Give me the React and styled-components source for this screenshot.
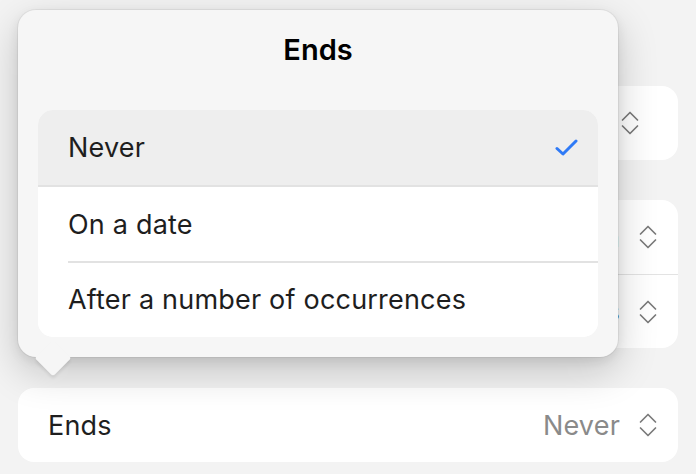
import React from "react";
import styled, { createGlobalStyle } from "styled-components";

const Global = createGlobalStyle`
  html, body { margin: 0; padding: 0; background: #f3f3f3; }
  body { font-family: Inter, "Noto Sans", "Liberation Sans", sans-serif; -webkit-font-smoothing: antialiased; }
  * { box-sizing: border-box; }
`;

const Page = styled.div`
  position: relative;
  width: 696px;
  height: 474px;
  overflow: hidden;
  background: #f3f3f3;
  padding: 86px 18px 0 18px;
`;

const Form = styled.div`
  display: flex;
  flex-direction: column;
  gap: 40px;
`;

const Card = styled.div`
  background: #ffffff;
  border-radius: 16px;
  overflow: hidden;
`;

const Row = styled.div`
  height: ${(p) => p.$h || 74}px;
  display: flex;
  align-items: center;
  justify-content: space-between;
  padding: 0 ${(p) => p.$pr || 21}px 0 30px;
  font-size: 27px;
  color: #1f1f1f;
  letter-spacing: 0.2px;
`;

const RowSep = styled.div`
  height: 1px;
  background: #e3e3e3;
  margin-left: 30px;
`;

const Trail = styled.div`
  display: flex;
  align-items: center;
  gap: ${(p) => p.$gap || 19}px;
`;

const Value = styled.span`
  color: ${(p) => (p.$muted ? "#8a8a8a" : "#2a2a2a")};
`;

const Popover = styled.div`
  position: absolute;
  left: 18px;
  top: 10px;
  width: 600px;
  height: 347px;
  background: #f6f6f6;
  border-radius: 18px;
  box-shadow: 0 0 0 1px rgba(0, 0, 0, 0.05), 0 14px 40px rgba(0, 0, 0, 0.2),
    0 4px 12px rgba(0, 0, 0, 0.08);
  padding: 0 20px 20px 20px;
  display: flex;
  flex-direction: column;
`;

const Arrow = styled.div`
  position: absolute;
  left: 22px;
  top: 335px;
  width: 26px;
  height: 26px;
  background: #f6f6f6;
  transform: rotate(45deg);
  border-radius: 3px;
  box-shadow: 2px 2px 3px rgba(0, 0, 0, 0.08);
`;

const Title = styled.div`
  margin-top: 20px;
  height: 40px;
  line-height: 40px;
  text-align: center;
  font-size: 29px;
  font-weight: 600;
  color: #000;
`;

const List = styled.div`
  position: relative;
  z-index: 1;
  margin-top: 40px;
  background: #ffffff;
  border-radius: 15px;
  overflow: hidden;
  display: flex;
  flex-direction: column;
`;

const Option = styled.div`
  height: ${(p) => p.$h || 75}px;
  display: flex;
  align-items: center;
  justify-content: space-between;
  padding: 0 20px 0 30px;
  font-size: 27px;
  color: #1e1e1e;
  background: ${(p) => (p.$selected ? "#eeeeee" : "#ffffff")};
  letter-spacing: 0.2px;
`;

const Divider = styled.div`
  height: 1.5px;
  background: #e2e2e2;
  margin-left: ${(p) => (p.$full ? 0 : 30)}px;
`;

const Updown = () => (
  <svg width="18" height="26" viewBox="0 0 18 26" fill="none">
    <path d="M1.5 10 L9 2.5 L16.5 10" stroke="#7b7b7b" strokeWidth="1.7" strokeLinecap="round" strokeLinejoin="round" />
    <path d="M1.5 16 L9 23.5 L16.5 16" stroke="#7b7b7b" strokeWidth="1.7" strokeLinecap="round" strokeLinejoin="round" />
  </svg>
);

const Check = () => (
  <svg width="23" height="17" viewBox="0 0 23 17" fill="none">
    <path d="M2 9.5 L8 15 L21 2" stroke="#2f7af6" strokeWidth="3" strokeLinecap="round" strokeLinejoin="round" />
  </svg>
);

export default function App() {
  return (
    <>
      <Global />
      <Page>
        <Form>
          <Card>
            <Row $pr={39}>
              <span>Date</span>
              <Trail>
                <Value>Today</Value>
                <Updown />
              </Trail>
            </Row>
          </Card>
          <Card>
            <Row>
              <span>Repeat</span>
              <Trail>
                <Value>Weekly on Mon</Value>
                <Updown />
              </Trail>
            </Row>
            <RowSep />
            <Row $h={73}>
              <span>Every</span>
              <Trail>
                <Value>2 weeks</Value>
                <Updown />
              </Trail>
            </Row>
          </Card>
          <Card>
            <Row>
              <span>Ends</span>
              <Trail>
                <Value $muted>Never</Value>
                <Updown />
              </Trail>
            </Row>
          </Card>
        </Form>
        <Popover>
          <Arrow />
          <Title>Ends</Title>
          <List>
            <Option $selected $h={76}>
              <span>Never</span>
              <Check />
            </Option>
            <Divider $full />
            <Option>
              <span>On a date</span>
            </Option>
            <Divider />
            <Option>
              <span>After a number of occurrences</span>
            </Option>
          </List>
        </Popover>
      </Page>
    </>
  );
}
